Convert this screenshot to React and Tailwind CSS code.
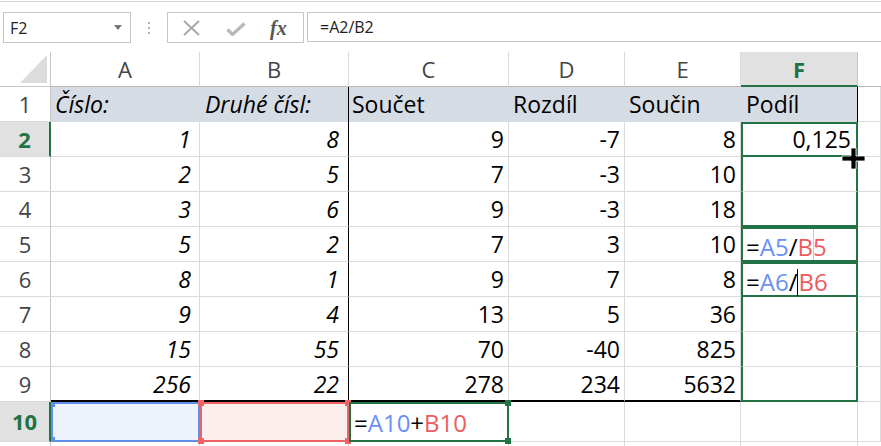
import React from "react";

const data = [
  [2, "1", "8", "9", "-7", "8"],
  [3, "2", "5", "7", "-3", "10"],
  [4, "3", "6", "9", "-3", "18"],
  [5, "5", "2", "7", "3", "10"],
  [6, "8", "1", "9", "7", "8"],
  [7, "9", "4", "13", "5", "36"],
  [8, "15", "55", "70", "-40", "825"],
  [9, "256", "22", "278", "234", "5632"],
];

// selection borders down column F
const fBorder = {
  2: "border-2 border-[#217346]",
  3: "border-x-2 border-x-[#217346] border-b border-b-[#dadada]",
  4: "border-x-2 border-b-2 border-[#217346]",
  5: "border-2 border-[#217346]",
  6: "border-2 border-[#217346]",
  7: "border-x-2 border-x-[#217346] border-b border-b-[#dadada]",
  8: "border-x-2 border-x-[#217346] border-b border-b-[#dadada]",
  9: "border-x-2 border-b-2 border-[#217346]",
};

const Blue = ({ children }) => <span className="text-[#6990f2]">{children}</span>;
const Red = ({ children }) => <span className="text-[#ee5b5e]">{children}</span>;

function RowHead({ n, sel, tall }) {
  return (
    <div
      className={`w-[51px] shrink-0 text-center text-[22px] border-b border-b-[#dadada] ${
        tall ? "leading-[39px]" : "leading-[34px]"
      } ${
        sel
          ? "bg-[#e1e1e1] text-[#217346] font-bold border-r-2 border-r-[#217346]"
          : "text-[#444] border-r border-r-[#c6c6c6]"
      }`}
    >
      {n}
    </div>
  );
}

function FCell({ r }) {
  const base = `w-[117px] shrink-0 relative ${fBorder[r]}`;
  if (r === 2)
    return <div className={`${base} text-right pr-[5px] leading-[31px]`}>0,125</div>;
  if (r === 5)
    return (
      <div className={`${base} pl-[3px] text-[24px] leading-[36px] whitespace-nowrap`}>
        =<Blue>A5</Blue>/<Red>B5</Red>
        <div className="absolute left-[70px] top-0 bottom-0 w-px bg-[#c8c8c8]" />
      </div>
    );
  if (r === 6)
    return (
      <div className={`${base} pl-[3px] text-[24px] leading-[36px] whitespace-nowrap`}>
        =<Blue>A6</Blue>/
        <span className="inline-block w-px h-[27px] bg-black align-[-5px]" />
        <Red>B6</Red>
      </div>
    );
  return <div className={base} />;
}

function DataRow({ row }) {
  const [r, a, b, c, d, e] = row;
  const bb = r === 9 ? "border-b-2 border-b-black" : "border-b border-b-[#dadada]";
  return (
    <div className="flex h-[35px] leading-[34px]">
      <RowHead n={r} sel={r === 2} />
      <div className={`w-[149px] shrink-0 border-r border-r-[#dadada] ${bb} text-right pr-[8px] italic`}>{a}</div>
      <div className={`w-[149px] shrink-0 border-r border-r-black ${bb} text-right pr-[9px] italic`}>{b}</div>
      <div className={`w-[160px] shrink-0 border-r border-r-[#dadada] ${bb} text-right pr-[4px]`}>{c}</div>
      <div className={`w-[116px] shrink-0 border-r border-r-[#dadada] ${bb} text-right pr-[4px]`}>{d}</div>
      <div className={`w-[116px] shrink-0 border-r border-r-[#dadada] ${bb} text-right pr-[4px]`}>{e}</div>
      <FCell r={r} />
      <div className="flex-1 border-r border-b border-[#dadada]" />
    </div>
  );
}

export default function App() {
  return (
    <div className="w-[881px] h-[446px] overflow-hidden bg-white relative font-['Open_Sans',sans-serif] text-[23px] text-black">
      {/* formula bar */}
      <div className="h-[52px] pt-px">
        <div className="h-px bg-[#d4d4d4]" />
        <div className="flex items-start mt-[10px]">
          <div className="ml-[3px] w-[128px] h-[31px] border border-[#c6c6c6] flex items-center justify-between pl-[6px] pr-[8px] text-[16px] text-[#222]">
            <span>F2</span>
            <svg width="8" height="5" viewBox="0 0 8 5">
              <path d="M0 0h8L4 5z" fill="#777" />
            </svg>
          </div>
          <div className="ml-[17px] mt-[10px] flex flex-col gap-[3px]">
            <div className="w-[2px] h-[2px] bg-[#b4b4b4]" />
            <div className="w-[2px] h-[2px] bg-[#b4b4b4]" />
            <div className="w-[2px] h-[2px] bg-[#b4b4b4]" />
          </div>
          <div className="ml-[17px] w-[137px] h-[31px] border border-[#c6c6c6] flex items-center">
            <svg className="ml-[14px]" width="19" height="16" viewBox="0 0 19 16">
              <path d="M2 1l15 14M17 1L2 15" stroke="#a8a8a8" strokeWidth="2" fill="none" />
            </svg>
            <svg className="ml-[25px] mt-[3px]" width="20" height="14" viewBox="0 0 20 14">
              <path d="M1.5 7.5l5 5L18.5 1.5" stroke="#b8b8b8" strokeWidth="3.2" fill="none" />
            </svg>
            <span className="ml-[24px] font-['Liberation_Serif',serif] italic font-bold text-[20px] text-[#555] leading-none">
              fx
            </span>
          </div>
          <div className="ml-[3px] flex-1 h-[30px] border-y border-l border-[#c6c6c6] pl-[12px] text-[16px] leading-[28px] text-[#222]">
            =A2/B2
          </div>
        </div>
      </div>

      {/* column headers */}
      <div className="flex h-[35px] text-[22px] leading-[34px] text-[#444]">
        <div className="w-[51px] shrink-0 border-r border-b border-[#c6c6c6] flex items-end justify-end pr-[3px] pb-[3px]">
          <svg width="27" height="28" viewBox="0 0 27 28">
            <path d="M27 0V28H0z" fill="#dcdcdc" />
          </svg>
        </div>
        <div className="w-[149px] shrink-0 text-center border-r border-r-[#dadada] border-b border-b-[#b8b8b8]">A</div>
        <div className="w-[149px] shrink-0 text-center border-r border-r-[#dadada] border-b border-b-[#b8b8b8]">B</div>
        <div className="w-[160px] shrink-0 text-center border-r border-r-[#dadada] border-b border-b-[#b8b8b8]">C</div>
        <div className="w-[116px] shrink-0 text-center border-r border-r-[#dadada] border-b border-b-[#b8b8b8]">D</div>
        <div className="w-[116px] shrink-0 text-center border-r border-r-[#dadada] border-b border-b-[#b8b8b8]">E</div>
        <div className="w-[117px] shrink-0 text-center bg-[#e1e1e1] text-[#217346] font-bold border-r border-r-[#c6c6c6] border-b-2 border-b-[#217346]">
          F
        </div>
        <div className="flex-1 border-b border-b-[#b8b8b8]" />
      </div>

      {/* row 1 */}
      <div className="flex h-[35px] leading-[34px]">
        <RowHead n={1} />
        <div className="w-[149px] shrink-0 bg-[#d6dce4] italic pl-[4px]">Číslo:</div>
        <div className="w-[149px] shrink-0 bg-[#d6dce4] italic pl-[5px] border-r border-r-black whitespace-nowrap">Druhé čísl:</div>
        <div className="w-[160px] shrink-0 bg-[#d6dce4] pl-[3px]">Součet</div>
        <div className="w-[116px] shrink-0 bg-[#d6dce4] pl-[4px]">Rozdíl</div>
        <div className="w-[116px] shrink-0 bg-[#d6dce4] pl-[4px]">Součin</div>
        <div className="w-[117px] shrink-0 bg-[#d6dce4] pl-[5px] border-r border-r-black">Podíl</div>
        <div className="flex-1 border-r border-b border-[#dadada]" />
      </div>

      {data.map((row) => (
        <DataRow key={row[0]} row={row} />
      ))}

      {/* row 10 */}
      <div className="flex h-[40px]">
        <RowHead n={10} sel tall />
        <div className="w-[149px] shrink-0 relative border-2 border-[#5f8fe8] bg-[#eef2fd]">
          <div className="absolute -left-[2px] -top-[2px] w-[4px] h-[5px] bg-[#5f8fe8]" />
          <div className="absolute -left-[2px] -bottom-[2px] w-[4px] h-[5px] bg-[#5f8fe8]" />
        </div>
        <div className="w-[149px] shrink-0 relative border-2 border-[#ef6265] bg-[#fdeeee]">
          <div className="absolute -left-[4px] -top-[4px] w-[6px] h-[6px] bg-[#ef6265]" />
          <div className="absolute -left-[4px] -bottom-[4px] w-[6px] h-[6px] bg-[#ef6265]" />
          <div className="absolute -right-[4px] -top-[4px] w-[6px] h-[6px] bg-[#ef6265]" />
          <div className="absolute -right-[4px] -bottom-[4px] w-[6px] h-[6px] bg-[#ef6265]" />
        </div>
        <div className="w-[160px] shrink-0 relative border-2 border-[#217346] pl-[3px] text-[24px] leading-[37px] whitespace-nowrap">
          =<Blue>A10</Blue>+<Red>B10</Red>
          <div className="absolute -right-[4px] -top-[4px] w-[6px] h-[6px] bg-[#217346]" />
          <div className="absolute -right-[4px] -bottom-[4px] w-[6px] h-[6px] bg-[#217346]" />
        </div>
        <div className="w-[116px] shrink-0 border-r border-b border-[#dadada]" />
        <div className="w-[116px] shrink-0 border-r border-b border-[#dadada]" />
        <div className="w-[117px] shrink-0 border-r border-b border-[#dadada]" />
        <div className="flex-1 border-r border-b border-[#dadada]" />
      </div>

      {/* row 11 sliver */}
      <div className="flex h-[10px]">
        <div className="w-[51px] shrink-0 border-r border-r-[#c6c6c6]" />
        <div className="w-[149px] shrink-0 border-r border-r-[#dadada]" />
        <div className="w-[149px] shrink-0 border-r border-r-[#dadada]" />
        <div className="w-[160px] shrink-0 border-r border-r-[#dadada]" />
        <div className="w-[116px] shrink-0 border-r border-r-[#dadada]" />
        <div className="w-[116px] shrink-0 border-r border-r-[#dadada]" />
        <div className="w-[117px] shrink-0 border-r border-r-[#dadada]" />
      </div>

      {/* fill-handle cursor */}
      <svg className="absolute left-[841px] top-[147px]" width="26" height="24" viewBox="0 0 26 24">
        <path d="M10 1H15V9H24V14H15V22H10V14H1V9H10Z" fill="#000" stroke="#fff" strokeWidth="0.8" />
      </svg>
    </div>
  );
}
